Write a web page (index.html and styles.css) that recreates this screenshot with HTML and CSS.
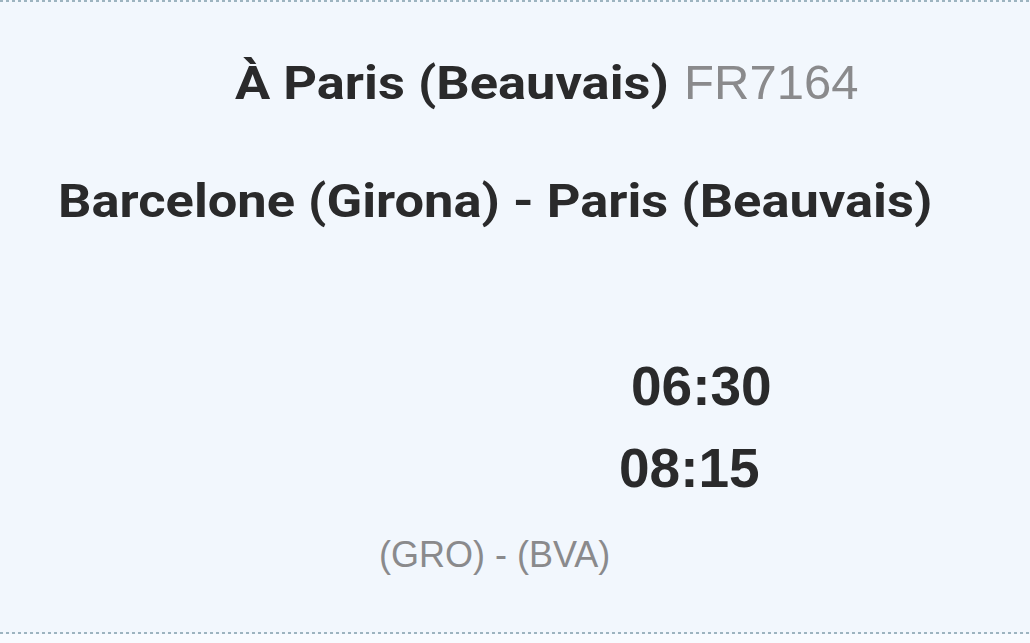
FILE: index.html
```html
<!DOCTYPE html>
<html lang="fr">
<head>
<meta charset="utf-8">
<title>Vol FR7164</title>
<link rel="stylesheet" href="styles.css">
</head>
<body>
<div class="card">
  <h1 class="title"><span class="wide name">À Paris (Beauvais)</span> <span class="flight">FR7164</span></h1>
  <h2 class="route"><span class="wide">Barcelone (Girona) - Paris (Beauvais)</span></h2>
  <div class="times">
    <div class="time dep">06:30</div>
    <div class="time arr">08:15</div>
  </div>
  <div class="codes">(GRO) - (BVA)</div>
</div>
</body>
</html>
```

FILE: styles.css
```css
html, body {
  margin: 0;
  padding: 0;
  background: #f8fbff;
}

.card {
  box-sizing: border-box;
  height: 634px;
  background-color: #f2f7fd;
  background-image:
    repeating-linear-gradient(to right, #9db4c0 0 3px, transparent 3px 6px),
    repeating-linear-gradient(to right, #9db4c0 0 3px, transparent 3px 6px);
  background-size: 100% 2px, 100% 2px;
  background-position: 0 0, 0 100%;
  background-repeat: no-repeat;
  padding-top: 55px;
  color: #2a2a2b;
}

.wide {
  display: inline-block;
  transform: scaleX(1.14);
  transform-origin: 0 50%;
}

.title {
  margin: 0;
  padding-left: 235px;
  font-family: Roboto, "Liberation Sans", sans-serif;
  font-weight: 700;
  font-size: 46px;
  line-height: 54px;
  white-space: nowrap;
}

.name {
  margin-right: 57px;
}

.flight {
  font-family: "Liberation Sans", Arial, sans-serif;
  font-weight: 400;
  color: #8a8a8c;
  font-size: 49px;
}

.route {
  margin: 64px 0 0;
  padding-left: 58px;
  font-family: Roboto, "Liberation Sans", sans-serif;
  font-weight: 700;
  font-size: 46px;
  line-height: 54px;
  white-space: nowrap;
}

.times {
  margin-top: 127px;
  display: flex;
  flex-direction: column;
  gap: 20px;
  font-family: "Liberation Sans", Arial, sans-serif;
  font-weight: 700;
  font-size: 55px;
  line-height: 62px;
}

.dep { padding-left: 631px; }
.arr { padding-left: 619px; }

.codes {
  margin-top: 35px;
  padding-left: 379px;
  font-family: "Liberation Sans", Arial, sans-serif;
  font-size: 36px;
  line-height: 42px;
  color: #8a8a8c;
}
```
